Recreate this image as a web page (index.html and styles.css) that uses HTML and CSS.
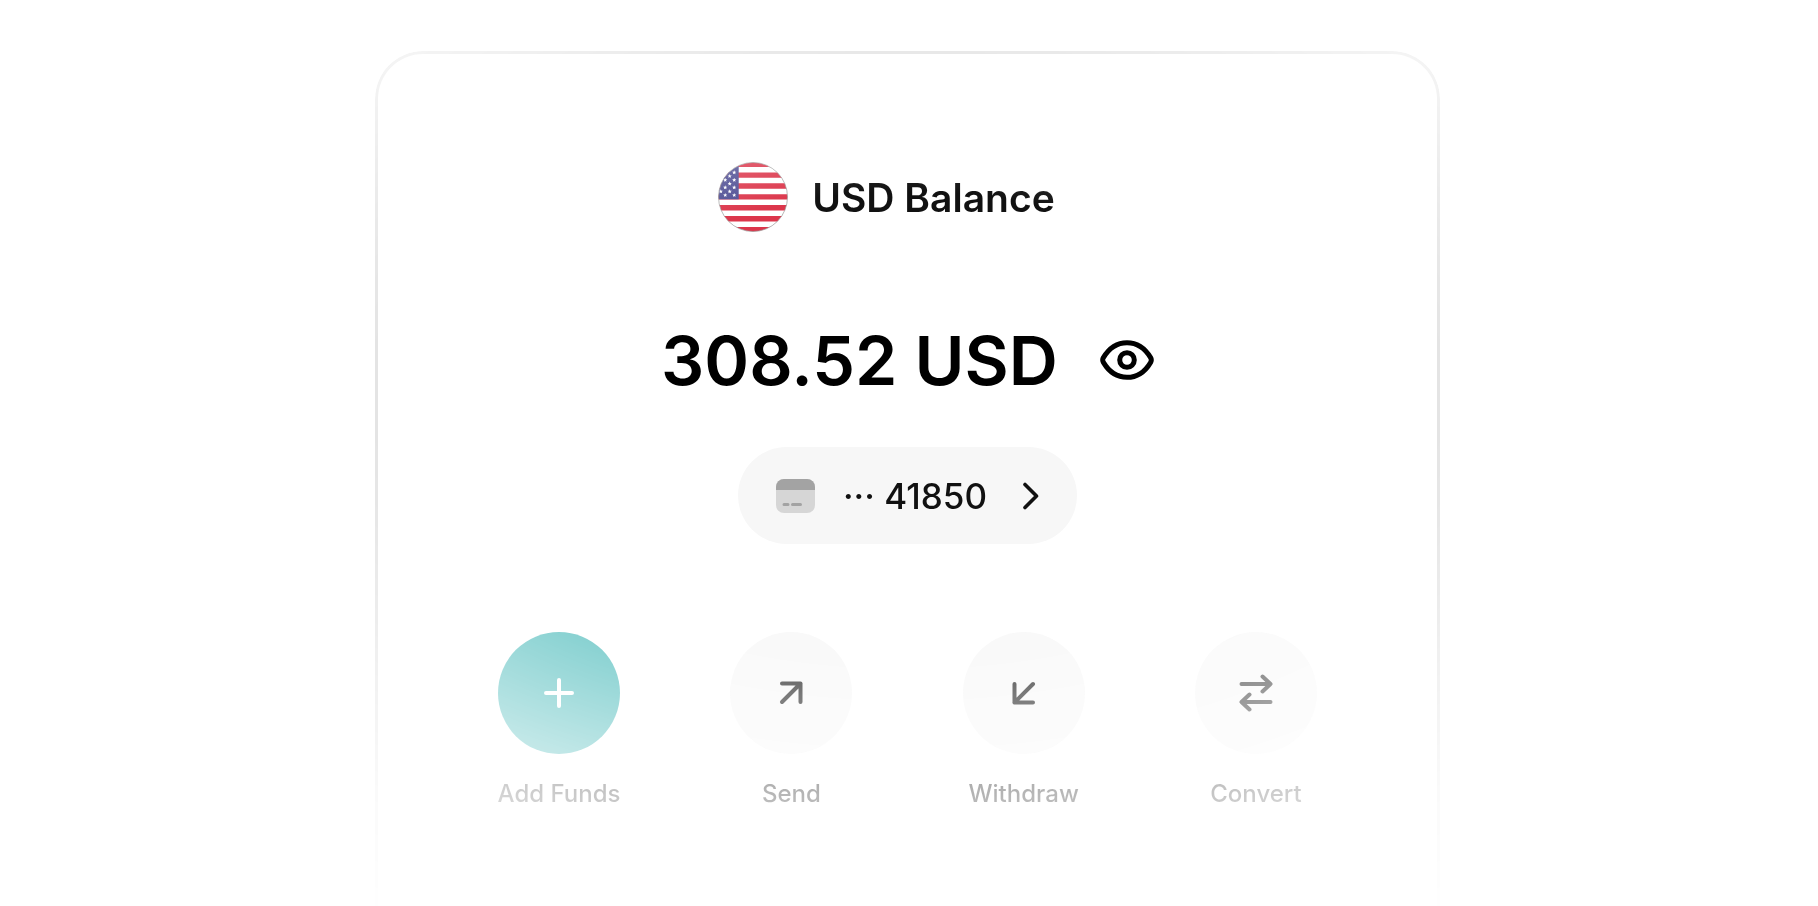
FILE: index.html
```html
<!DOCTYPE html>
<html lang="en">
<head>
<meta charset="utf-8">
<meta name="viewport" content="width=device-width, initial-scale=1">
<title>USD Balance</title>
<link rel="stylesheet" href="styles.css">
</head>
<body>
<main class="card">
  <header class="account">
    <svg class="flag" viewBox="0 0 70 70" role="img" aria-label="United States">
      <defs>
        <clipPath id="disc"><circle cx="35" cy="35" r="34.5"/></clipPath>
        <path id="star" d="M0-2.2.6-.7 2.1-.7.9.3 1.3 1.8 0 .9-1.3 1.8-.9.3-2.1-.7-.6-.7Z"/>
      </defs>
      <g clip-path="url(#disc)">
        <rect width="70" height="70" fill="#fff"/>
        <path d="M0 2.2h70M0 13.1h70M0 24h70M0 34.9h70M0 45.8h70M0 56.7h70M0 67.6h70" stroke="#dc364b" stroke-width="5.4"/>
        <rect width="20.7" height="37.3" fill="#4f4e94"/>
        <g fill="#fff">
          <use href="#star" x="16.2" y="10.5"/><use href="#star" x="11.7" y="14.2"/>
          <use href="#star" x="16.2" y="18"/><use href="#star" x="7.2" y="18"/>
          <use href="#star" x="11.7" y="21.8"/><use href="#star" x="16.2" y="25.5"/>
          <use href="#star" x="7.2" y="25.5"/><use href="#star" x="2.8" y="29.5"/>
          <use href="#star" x="11.7" y="29.5"/><use href="#star" x="16.2" y="33.2"/>
          <use href="#star" x="7.2" y="33.2"/>
        </g>
      </g>
      <circle cx="35" cy="35" r="34.5" fill="none" stroke="#999" stroke-opacity=".7"/>
    </svg>
    <h1 class="account-name">USD Balance</h1>
  </header>

  <div class="balance">
    <p class="amount">308.52 USD</p>
    <button class="reveal" type="button" aria-label="Hide balance">
      <svg class="eye" viewBox="0 0 54 42" fill="none" stroke="#000" stroke-width="5">
        <path d="M3.400 18.600C9 9.200 17.300 3.700 27 3.700S45 9.200 50.600 18.600Q52 21 50.600 23.400C45 32.800 36.700 38.300 27 38.300S9 32.800 3.400 23.400Q2 21 3.400 18.600Z"/>
        <circle cx="27" cy="21" r="7.300"/>
      </svg>
    </button>
  </div>

  <button class="number" type="button">
    <svg class="bank-card" viewBox="0 0 39 34">
      <rect width="39" height="34" rx="8" fill="#d6d6d6"/>
      <path d="M0 11V8a8 8 0 0 1 8-8h23a8 8 0 0 1 8 8v3Z" fill="#a3a3a3"/>
      <path d="M8 25.500h4M16.500 25.500h8" stroke="#a3a3a3" stroke-width="3" stroke-linecap="round"/>
    </svg>
    <span class="digits">··· 41850</span>
    <svg class="chevron" viewBox="0 0 16 28" fill="none" stroke="#111" stroke-width="3.600" stroke-linecap="round" stroke-linejoin="round">
      <path d="M2 2.500 13.500 14 2 25.500"/>
    </svg>
  </button>

  <nav class="actions" aria-label="Account actions">
    <button class="action" type="button">
      <span class="disc primary">
        <svg class="icon" viewBox="0 0 40 40"><path d="M20 7v26M7 20h26"/></svg>
      </span>
      <span class="label">Add Funds</span>
    </button>
    <button class="action" type="button">
      <span class="disc">
        <svg class="icon" viewBox="0 0 40 40"><path d="M11 10.500h18.500V29M29.500 10.500 11 29"/></svg>
      </span>
      <span class="label">Send</span>
    </button>
    <button class="action" type="button">
      <span class="disc">
        <svg class="icon" viewBox="0 0 40 40"><path d="M29 29.500H10.500V11M10.500 29.500 29 11"/></svg>
      </span>
      <span class="label">Withdraw</span>
    </button>
    <button class="action" type="button">
      <span class="disc">
        <svg class="icon" viewBox="0 0 40 40"><path d="M5.500 11h29M26.500 3.500 34.500 11 26.500 18.500M34.500 29h-29M13.500 21.500 5.500 29 13.500 36.500"/></svg>
      </span>
      <span class="label">Convert</span>
    </button>
  </nav>
</main>
</body>
</html>
```
FILE: styles.css
```css
* {
  box-sizing: border-box;
}

body {
  margin: 0;
  padding: 51px 27px 0 24px;
  background: #fff;
  color: #000;
  font-family: Inter, "Liberation Sans", sans-serif;
}

button {
  border: 0;
  padding: 0;
  background: none;
  color: inherit;
  font: inherit;
  cursor: pointer;
}

svg {
  display: block;
  flex: none;
}

.card {
  display: flex;
  flex-direction: column;
  align-items: center;
  max-width: 1065px;
  min-height: calc(100vh - 51px);
  margin: 0 auto;
  padding: 108px 24px 0;
  border: 3px solid #d0d0d0;
  border-bottom: 0;
  border-radius: 48px 48px 0 0;
  mask-image: radial-gradient(
    916px 526px at 50% 340px,
    #000 38%,
    rgb(0 0 0 / 0.56) 59%,
    rgb(0 0 0 / 0.3) 78%,
    rgb(0 0 0 / 0.1) 96%,
    transparent 118%
  );
}

.account {
  display: flex;
  align-items: center;
  gap: 24px;
  padding-right: 42px;
}

.flag {
  width: 70px;
  height: 70px;
}

.account-name {
  margin: 0;
  padding-top: 2px;
  color: #111;
  font-size: 39px;
  font-weight: 600;
  line-height: 48px;
}

.balance {
  display: flex;
  align-items: center;
  gap: 42px;
  margin-top: 94px;
}

.amount {
  margin: 0;
  font-size: 68px;
  font-weight: 600;
  line-height: 68px;
}

.eye {
  width: 54px;
  height: 42px;
}

.number {
  display: flex;
  align-items: center;
  height: 97px;
  margin-top: 53px;
  padding: 0 38px;
  border-radius: 49px;
  background: #f7f7f7;
}

.bank-card {
  width: 39px;
  height: 34px;
}

.digits {
  margin: 0 36px 0 28px;
  color: #111;
  font-size: 35px;
  font-weight: 500;
  line-height: 40px;
}

.chevron {
  width: 16px;
  height: 28px;
}

.actions {
  display: flex;
  justify-content: space-between;
  align-self: stretch;
  margin-top: 88px;
  padding: 0 95px;
}

.action {
  display: flex;
  flex-direction: column;
  align-items: center;
  gap: 24px;
  width: 124px;
}

.disc {
  display: grid;
  place-items: center;
  width: 122px;
  height: 122px;
  border-radius: 50%;
  background: #f7f7f7;
}

.primary {
  background: #2eafaf;
}

.icon {
  width: 40px;
  height: 40px;
  fill: none;
  stroke: #111;
  stroke-width: 4;
  stroke-linecap: round;
  stroke-linejoin: round;
}

.primary .icon {
  stroke: #fff;
}

.label {
  color: #111;
  font-size: 24px;
  font-weight: 500;
  line-height: 32px;
  white-space: nowrap;
}

@media (max-width: 900px) {
  .actions {
    flex-wrap: wrap;
    justify-content: center;
    gap: 32px;
    padding: 0;
  }
}
```
